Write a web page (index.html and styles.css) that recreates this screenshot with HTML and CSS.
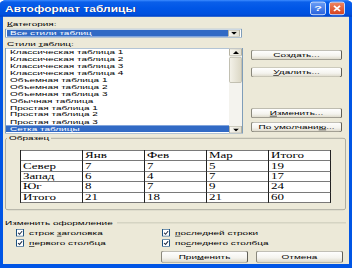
FILE: index.html
```html
<!DOCTYPE html>
<html lang="ru">

<head>
    <meta charset="UTF-8">
    <meta name="viewport" content="width=device-width, initial-scale=1.0">
    <title>Автоформат таблицы</title>
    <link rel="stylesheet" href="styles.css">
</head>

<body>
    <div class="stage">
    <div class="window">
        <div class="titlebar">
            <span class="title">Автоформат таблицы</span>
            <div class="caption_btns">
                <span class="cap_btn help">?</span>
                <span class="cap_btn close">
                    <svg viewBox="0 0 10 10" preserveAspectRatio="none">
                        <path d="M2 2L8 8M8 2L2 8" stroke="#fff" stroke-width="1.8" fill="none" />
                    </svg>
                </span>
            </div>
        </div>

        <div class="client">
            <div class="label cat"><u>К</u>атегория:</div>
            <div class="combo">
                <span class="combo_value">Все стили таблиц</span>
                <span class="drop">
                    <svg viewBox="0 0 7 4" preserveAspectRatio="none">
                        <polygon points="0,0 7,0 3.5,4" fill="#000" />
                    </svg>
                </span>
            </div>

            <div class="label styles">Стили <u>т</u>аблиц:</div>
            <div class="styles_row">
                <div class="listbox">
                    <ul class="items">
                        <li>Классическая таблица 1</li>
                        <li>Классическая таблица 2</li>
                        <li>Классическая таблица 3</li>
                        <li>Классическая таблица 4</li>
                        <li>Объемная таблица 1</li>
                        <li>Объемная таблица 2</li>
                        <li>Объемная таблица 3</li>
                        <li>Обычная таблица</li>
                        <li>Простая таблица 1</li>
                        <li>Простая таблица 2</li>
                        <li>Простая таблица 3</li>
                        <li class="sel">Сетка таблицы</li>
                    </ul>
                    <div class="scrollbar">
                        <span class="sb_btn">
                            <svg viewBox="0 0 7 4" preserveAspectRatio="none">
                                <polygon points="0,4 7,4 3.5,0" fill="#000" />
                            </svg>
                        </span>
                        <span class="sb_thumb"></span>
                        <span class="sb_btn down">
                            <svg viewBox="0 0 7 4" preserveAspectRatio="none">
                                <polygon points="0,0 7,0 3.5,4" fill="#000" />
                            </svg>
                        </span>
                    </div>
                </div>
                <div class="side_btns">
                    <button class="btn">Создать...</button>
                    <button class="btn delete"><u>У</u>далить...</button>
                    <button class="btn edit"><u>И</u>зменить...</button>
                    <button class="btn default">По умолчани<u>ю</u>...</button>
                </div>
            </div>

            <fieldset class="sample">
                <legend>Образец</legend>
                <table>
                    <tr>
                        <td></td>
                        <td>Янв</td>
                        <td>Фев</td>
                        <td>Мар</td>
                        <td>Итого</td>
                    </tr>
                    <tr>
                        <td>Север</td>
                        <td>7</td>
                        <td>7</td>
                        <td>5</td>
                        <td>19</td>
                    </tr>
                    <tr>
                        <td>Запад</td>
                        <td>6</td>
                        <td>4</td>
                        <td>7</td>
                        <td>17</td>
                    </tr>
                    <tr>
                        <td>Юг</td>
                        <td>8</td>
                        <td>7</td>
                        <td>9</td>
                        <td>24</td>
                    </tr>
                    <tr>
                        <td>Итого</td>
                        <td>21</td>
                        <td>18</td>
                        <td>21</td>
                        <td>60</td>
                    </tr>
                </table>
            </fieldset>

            <div class="format_head">
                <span>Изменить оформление</span>
                <span class="rule"></span>
            </div>
            <div class="checks">
                <label class="check"><span class="box"><svg viewBox="0 0 8 12" preserveAspectRatio="none"><path d="M1.5 6L3.4 9L6.8 2.5" stroke="#1d2b44" stroke-width="1.5" fill="none" /></svg></span><span>строк <u>з</u>аголовка</span></label>
                <label class="check"><span class="box"><svg viewBox="0 0 8 12" preserveAspectRatio="none"><path d="M1.5 6L3.4 9L6.8 2.5" stroke="#1d2b44" stroke-width="1.5" fill="none" /></svg></span><span><u>п</u>оследней строки</span></label>
                <label class="check"><span class="box"><svg viewBox="0 0 8 12" preserveAspectRatio="none"><path d="M1.5 6L3.4 9L6.8 2.5" stroke="#1d2b44" stroke-width="1.5" fill="none" /></svg></span><span><u>п</u>ервого столбца</span></label>
                <label class="check"><span class="box"><svg viewBox="0 0 8 12" preserveAspectRatio="none"><path d="M1.5 6L3.4 9L6.8 2.5" stroke="#1d2b44" stroke-width="1.5" fill="none" /></svg></span><span>по<u>с</u>леднего столбца</span></label>
            </div>

            <div class="actions">
                <button class="btn">При<u>м</u>енить</button>
                <button class="btn">Отмена</button>
            </div>
        </div>
    </div>
    </div>
</body>

</html>
```

FILE: styles.css
```css
* {
    box-sizing: border-box;
}

html {
    overflow: hidden;
}

body {
    margin: 0;
    width: 352px;
    height: 268px;
    overflow: hidden;
    background: #fff;
    font-family: "Liberation Sans", Arial, sans-serif;
    font-size: 10px;
    color: #000;
}

.stage {
    width: 352px;
    height: 268px;
    overflow: hidden;
}

/* the dialog is squeezed vertically, like the screenshot */
.window {
    width: 352px;
    height: 447px;
    transform: scaleY(0.6);
    transform-origin: 0 0;
    background: #0055e5;
    border-radius: 7px 7px 0 0;
    display: flex;
    flex-direction: column;
}

.titlebar {
    height: 28px;
    flex: none;
    display: flex;
    align-items: center;
    padding: 0 7px 0 5px;
    border-radius: 7px 7px 0 0;
    background: linear-gradient(#3d8cff 0%, #0a5fea 12%, #0056e6 50%, #0050de 85%, #0040c4 100%);
}

.title {
    flex: 1;
    color: #fff;
    font-weight: bold;
    font-size: 12px;
    line-height: 14px;
    transform: scaleY(1.3);
    transform-origin: 0 50%;
    text-shadow: 1px 1px #0a2a80;
}

.caption_btns {
    display: flex;
    gap: 3px;
}

.cap_btn {
    width: 16px;
    height: 22px;
    border: 1px solid #fff;
    border-width: 1.7px 1px;
    border-radius: 3px;
    display: flex;
    align-items: center;
    justify-content: center;
}

.help {
    background: linear-gradient(#6a9ef7, #2a63dd);
    color: #fff;
    font-weight: bold;
    font-size: 13px;
}

.close {
    background: linear-gradient(#f08660, #d6421e);
}

.close svg {
    width: 10px;
    height: 14px;
}

.client {
    flex: 1;
    margin: 0 3px 7px;
    padding: 0 0 0 2px;
    background: #ece9d8;
    display: flex;
    flex-direction: column;
}

.label {
    line-height: 14px;
    margin-left: 2px;
}

.cat {
    margin-top: 5px;
}

.styles {
    margin-top: 3px;
}

.combo {
    width: 237px;
    height: 15px;
    margin-top: 1px;
    border: 1px solid #7f9db9;
    border-width: 1.7px 1px;
    padding: 1px;
    background: #fff;
    display: flex;
}

.combo_value {
    flex: 1;
    background: #316ac5;
    color: #fff;
    padding-left: 3px;
    line-height: 9.6px;
}

.drop,
.sb_btn {
    width: 12px;
    background: linear-gradient(90deg, #f7f6f1, #e3e0d2);
    border: 1px solid #b5b2a2;
    border-width: 1.7px 1px;
    display: flex;
    align-items: center;
    justify-content: center;
}

.drop svg,
.sb_btn svg {
    width: 6px;
    height: 5px;
}

.styles_row {
    display: flex;
    gap: 8px;
}

.listbox {
    width: 238px;
    height: 143px;
    border: 1px solid #7f9db9;
    border-width: 1.7px 1px;
    background: #fff;
    display: flex;
}

.items {
    list-style: none;
    margin: 0;
    padding: 0;
    flex: 1;
}

.items li {
    height: 11.6px;
    line-height: 11.6px;
    padding-left: 4px;
    white-space: nowrap;
}

.items li.sel {
    background: #316ac5;
    color: #fff;
}

.scrollbar {
    width: 13px;
    display: flex;
    flex-direction: column;
    background: #f4f3ee;
}

.sb_btn {
    width: 13px;
    height: 12px;
}

.sb_btn.down {
    margin-top: auto;
}

.sb_thumb {
    height: 43px;
    margin-top: 2px;
    background: linear-gradient(90deg, #f3f1e8, #dcd8c6);
    border: 1px solid #b5b2a2;
    border-width: 1.7px 1px;
    border-radius: 2px;
}

.side_btns {
    width: 91px;
    padding-top: 3px;
    display: flex;
    flex-direction: column;
}

.btn {
    height: 17px;
    padding: 0;
    font-family: inherit;
    font-size: 10px;
    color: #000;
    border: 1px solid #8a887c;
    border-width: 1.7px 1px;
    border-right-color: #5e5d55;
    border-bottom-color: #5e5d55;
    border-radius: 3px;
    background: linear-gradient(#ffffff, #f4f3ee 60%, #dcd8c8);
}

.delete {
    margin-top: 12px;
}

.edit {
    margin-top: 51px;
}

.default {
    margin-top: 6px;
}

.sample {
    margin: 0 3px 0 0;
    padding: 13px 0 11px;
    min-width: 0;
    border: 1px solid #9d9d93;
    border-width: 1.7px 1px;
    border-radius: 3px;
}

.sample legend {
    padding: 0 2px;
    margin-left: 1px;
    line-height: 14px;
}

.sample table {
    margin-left: 14px;
    width: 311px;
    border-collapse: collapse;
    background: #fff;
    font-family: "Liberation Serif", "Times New Roman", serif;
    font-size: 13px;
}

.sample td {
    width: 20%;
    height: 17.4px;
    padding: 0 2px;
    line-height: 14px;
    border: 1px solid #222;
    border-width: 1.7px 1px;
}

.format_head {
    display: flex;
    align-items: center;
    margin-top: 15px;
    line-height: 14px;
}

.format_head .rule {
    flex: 1;
    margin: 0 3px 0 4px;
    border-top: 1.7px solid #b5b3a5;
}

.checks {
    display: grid;
    grid-template-columns: 146px 1fr;
    padding-left: 11px;
    margin-top: 1px;
}

.check {
    height: 17px;
    display: flex;
    align-items: center;
    gap: 5px;
}

.box {
    width: 8px;
    height: 12px;
    border: 1px solid #1c5180;
    border-width: 1.7px 1px;
    background: #fff;
    display: flex;
}

.box svg {
    width: 100%;
    height: 100%;
}

.actions {
    display: flex;
    justify-content: flex-end;
    gap: 8px;
    margin: 4px 6px 0 0;
}

.actions .btn {
    width: 87px;
    height: 20px;
}
```
